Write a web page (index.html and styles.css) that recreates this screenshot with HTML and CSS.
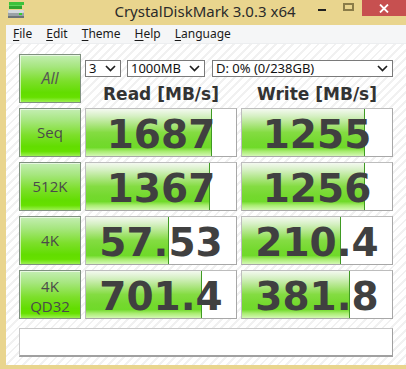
FILE: index.html
```html
<!DOCTYPE html>
<html>
<head>
<meta charset="utf-8">
<title>CrystalDiskMark</title>
<link rel="stylesheet" href="styles.css">
</head>
<body>
<div class="window">
  <div class="titlebar">
    <div class="tb-left">
      <svg class="appicon" width="18" height="18" viewBox="0 0 18 18">
        <rect x="2" y="0" width="15" height="3" fill="#3cc23a"/>
        <rect x="2" y="3" width="13" height="4" fill="#2fa52e"/>
        <rect x="2" y="3" width="13" height="1" fill="#5fd65c"/>
        <rect x="1" y="8" width="16" height="8" rx="1" fill="#9aa2a6"/>
        <rect x="1" y="8" width="16" height="3" rx="1" fill="#d4d9dc"/>
        <rect x="1" y="14" width="16" height="2" fill="#6c7478"/>
        <rect x="12" y="11" width="3" height="2" fill="#35d02e"/>
      </svg>
    </div>
    <div class="title">CrystalDiskMark 3.0.3 x64</div>
    <div class="controls">
      <div class="ctl min"><span class="min-bar"></span></div>
      <div class="ctl max"><span class="max-box"></span></div>
      <div class="ctl close">
        <svg width="10" height="9" viewBox="0 0 10 9"><path d="M1 0.5 L9 8.5 M9 0.5 L1 8.5" stroke="#fff" stroke-width="1.8"/></svg>
      </div>
    </div>
  </div>
  <div class="client">
    <div class="menubar">
      <span class="mi"><u>F</u>ile</span>
      <span class="mi"><u>E</u>dit</span>
      <span class="mi"><u>T</u>heme</span>
      <span class="mi"><u>H</u>elp</span>
      <span class="mi"><u>L</u>anguage</span>
    </div>
    <div class="content">
      <div class="grid">
        <div class="label all">All</div>
        <div class="topright">
          <div class="combos">
            <div class="combo c1"><span>3</span><svg class="chev" width="11" height="7" viewBox="0 0 11 7"><polyline points="1,1 5.5,5.5 10,1" fill="none" stroke="#1e1e1e" stroke-width="1.7"/></svg></div>
            <div class="combo c2"><span>1000MB</span><svg class="chev" width="11" height="7" viewBox="0 0 11 7"><polyline points="1,1 5.5,5.5 10,1" fill="none" stroke="#1e1e1e" stroke-width="1.7"/></svg></div>
            <div class="combo c3"><span>D: 0% (0/238GB)</span><svg class="chev" width="11" height="7" viewBox="0 0 11 7"><polyline points="1,1 5.5,5.5 10,1" fill="none" stroke="#1e1e1e" stroke-width="1.7"/></svg></div>
          </div>
          <div class="headers">
            <div class="hdr">Read [MB/s]</div>
            <div class="hdr">Write [MB/s]</div>
          </div>
        </div>

        <div class="label">Seq</div>
        <div class="val"><div class="fill" style="width:83.5%"></div><span class="num">1687</span></div>
        <div class="val"><div class="fill" style="width:81%"></div><span class="num">1255</span></div>

        <div class="label">512K</div>
        <div class="val"><div class="fill" style="width:82.3%"></div><span class="num">1367</span></div>
        <div class="val"><div class="fill" style="width:81%"></div><span class="num">1256</span></div>

        <div class="label">4K</div>
        <div class="val"><div class="fill" style="width:54.5%"></div><span class="num">57.53</span></div>
        <div class="val"><div class="fill" style="width:65.5%"></div><span class="num">210.4</span></div>

        <div class="label two"><span>4K</span><span>QD32</span></div>
        <div class="val"><div class="fill" style="width:76.5%"></div><span class="num">701.4</span></div>
        <div class="val"><div class="fill" style="width:71%"></div><span class="num">381.8</span></div>
      </div>
      <div class="status"></div>
    </div>
  </div>
</div>
</body>
</html>
```
FILE: styles.css
```css
html, body {
  margin: 0;
  padding: 0;
  overflow: hidden;
}
body {
  width: 406px;
  height: 369px;
}
.window {
  width: 406px;
  height: 369px;
  background: #e9d58e;
  display: flex;
  flex-direction: column;
  font-family: "Noto Sans", "DejaVu Sans", sans-serif;
}
.titlebar {
  height: 25px;
  display: grid;
  grid-template-columns: 1fr auto 1fr;
  align-items: start;
}
.tb-left {
  padding: 2px 0 0 7px;
}
.appicon {
  display: block;
}
.title {
  font-size: 15px;
  color: #2a2a2a;
  line-height: 20px;
  padding-top: 1px;
  padding-left: 4px;
  white-space: nowrap;
}
.controls {
  display: flex;
  justify-content: flex-end;
  align-items: flex-start;
}
.ctl {
  height: 16px;
  display: flex;
  justify-content: center;
}
.min {
  width: 27px;
}
.min-bar {
  width: 8px;
  height: 2px;
  margin-top: 9px;
  background: #202020;
}
.max {
  width: 27px;
}
.max-box {
  width: 7px;
  height: 4px;
  margin-top: 3px;
  border: 2px solid #8a7c48;
}
.close {
  width: 44px;
  background: #c75050;
  align-items: center;
}
.close svg {
  display: block;
}
.client {
  flex: 1;
  margin: 0 0 4px 6px;
  display: flex;
  flex-direction: column;
  background: #fff;
}
.menubar {
  height: 19px;
  background: #f5f6f7;
  display: flex;
  align-items: center;
  font-size: 12px;
  color: #1a1a1a;
  border-bottom: 1px solid #eceef0;
  box-sizing: border-box;
}
.mi {
  padding: 0 7px;
  line-height: 16px;
}
.mi u {
  text-decoration-thickness: 1px;
  text-underline-offset: 2px;
}
.content {
  flex: 1;
  padding: 10px 0 0 13px;
  background-color: #ffffff;
  background-image: repeating-linear-gradient(135deg, #ffffff 0px, #ffffff 4px, #f1f1f1 4px, #f1f1f1 6px);
}
.grid {
  display: grid;
  grid-template-columns: 62px 152px 152px;
  grid-auto-rows: 49px;
  column-gap: 4px;
  row-gap: 5px;
}
.label {
  box-sizing: border-box;
  border: 1px solid #7f917f;
  background: linear-gradient(to bottom, #c4eeb4 0%, #a6e67e 25%, #7ddf2c 55%, #62dd00 80%, #66e000 90%, #9cf050 100%);
  display: flex;
  flex-direction: column;
  align-items: center;
  justify-content: center;
  text-align: center;
  color: #4a4a4a;
  font-family: "Open Sans", "Noto Sans", sans-serif;
  font-size: 15px;
  font-weight: 400;
  line-height: 17px;
  box-shadow: inset 1px 1px 0 rgba(255,255,255,0.6);
}
.label.all {
  font-style: italic;
  font-size: 16px;
  color: #555;
}
.label.two {
  line-height: 20px;
  padding-top: 3px;
}
.label.two span {
  display: block;
  height: 20px;
}
.topright {
  grid-column: 2 / 4;
  display: flex;
  flex-direction: column;
  padding-top: 6px;
}
.combos {
  display: flex;
  height: 17px;
}
.combo {
  box-sizing: border-box;
  height: 17px;
  border: 1px solid #7a7a7a;
  background: #fff;
  display: flex;
  align-items: center;
  justify-content: space-between;
  padding: 0 4px 0 3px;
  font-size: 13px;
  color: #111;
}
.combo span {
  line-height: 15px;
}
.chev {
  display: block;
}
.c1 {
  width: 36px;
  margin-right: 6px;
}
.c2 {
  width: 78px;
  margin-right: 7px;
}
.c3 {
  width: 181px;
}
.headers {
  display: grid;
  grid-template-columns: 152px 152px;
  column-gap: 4px;
  margin-top: 7px;
}
.hdr {
  text-align: center;
  font-family: "DejaVu Sans", sans-serif;
  font-weight: bold;
  font-size: 17px;
  line-height: 20px;
  color: #333333;
  white-space: nowrap;
}
.val {
  position: relative;
  box-sizing: border-box;
  border: 1px solid #bdbdbd;
  border-right-color: #a8a8a8;
  border-bottom-color: #a8a8a8;
  background: #fff;
  display: flex;
  align-items: center;
  justify-content: center;
  overflow: hidden;
}
.fill {
  position: absolute;
  left: 0;
  top: 0;
  bottom: 0;
  border-right: 1px solid #3f9a23;
  background: linear-gradient(to bottom, #f4f9f0 0%, #d6f0c4 15%, #a8e47a 35%, #84dc42 50%, #74d92e 70%, #70da2a 82%, #a8ec70 90%, #d4f8b4 100%);
}
.num {
  position: relative;
  font-family: "DejaVu Sans", sans-serif;
  font-weight: bold;
  font-size: 39px;
  color: #404040;
  padding-top: 3px;
  white-space: nowrap;
}
.status {
  box-sizing: border-box;
  width: 374px;
  height: 29px;
  margin-top: 9px;
  background: #fff;
  border: 1px solid #c8c8c8;
  border-right-color: #a0a0a0;
  border-bottom: 2px solid #a0a0a0;
}
```
